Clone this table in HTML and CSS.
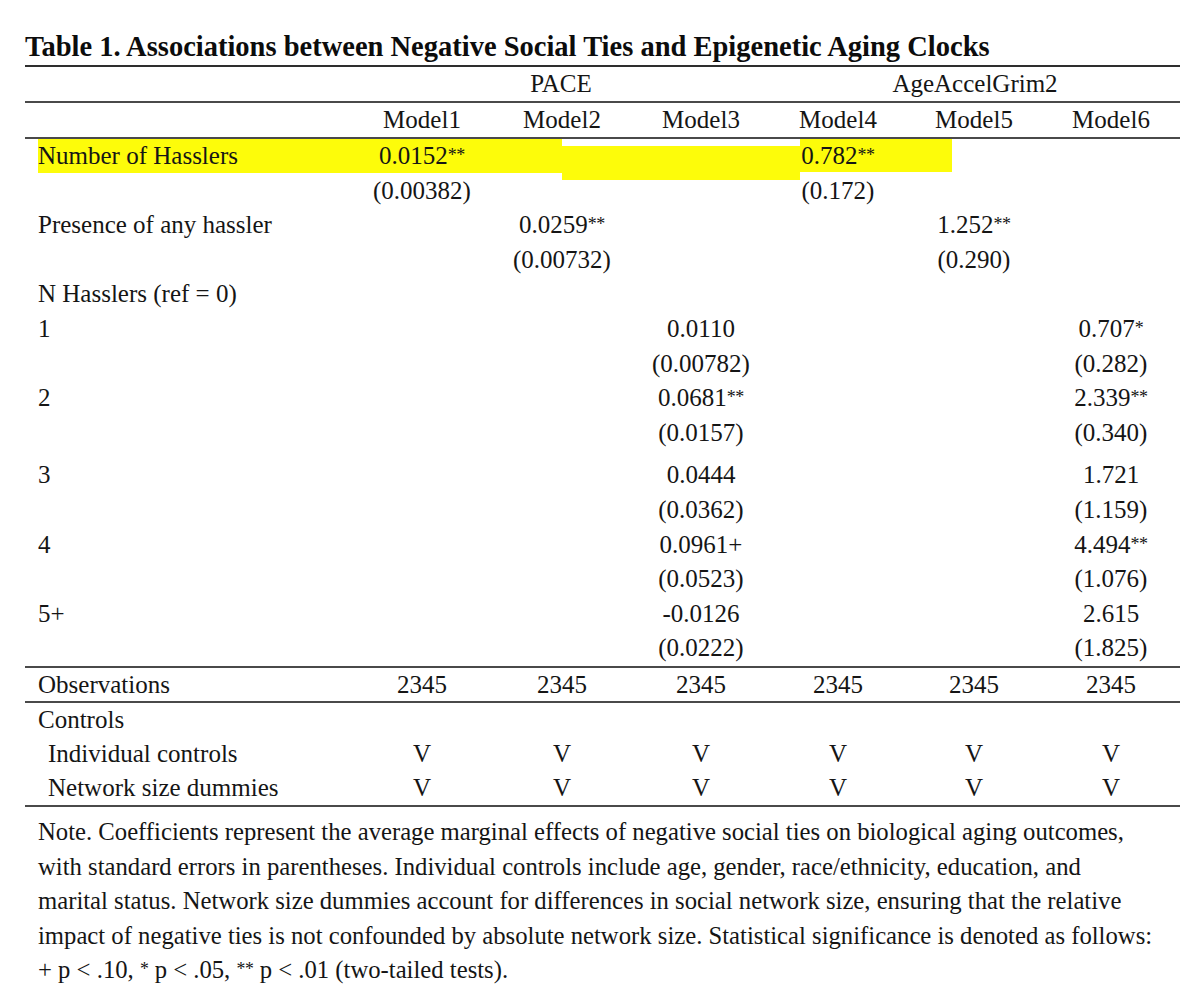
FILE: index.html
```html
<!DOCTYPE html>
<html lang="en">
<head>
<meta charset="utf-8">
<title>Table 1</title>
<link rel="stylesheet" href="styles.css">
</head>
<body>
<div class="sheet">
  <h1 class="title">Table 1. Associations between Negative Social Ties and Epigenetic Aging Clocks</h1>

  <div class="hdr row">
    <div class="lab"></div>
    <div class="span3">PACE</div>
    <div class="span3">AgeAccelGrim2</div>
  </div>
  <div class="hdr row">
    <div class="lab"></div>
    <div>Model1</div><div>Model2</div><div>Model3</div>
    <div>Model4</div><div>Model5</div><div>Model6</div>
  </div>

  <div class="coef">
    <div class="hl hl-a"></div>
    <div class="hl hl-b"></div>
    <div class="hl hl-c"></div>

    <div class="row"><div class="lab">Number of Hasslers</div><div>0.0152<span class="sig">**</span></div><div></div><div></div><div>0.782<span class="sig">**</span></div><div></div><div></div></div>
    <div class="row"><div class="lab"></div><div>(0.00382)</div><div></div><div></div><div>(0.172)</div><div></div><div></div></div>
    <div class="row"><div class="lab">Presence of any hassler</div><div></div><div>0.0259<span class="sig">**</span></div><div></div><div></div><div>1.252<span class="sig">**</span></div><div></div></div>
    <div class="row"><div class="lab"></div><div></div><div>(0.00732)</div><div></div><div></div><div>(0.290)</div><div></div></div>
    <div class="row"><div class="lab">N Hasslers (ref = 0)</div><div></div><div></div><div></div><div></div><div></div><div></div></div>
    <div class="row"><div class="lab">1</div><div></div><div></div><div>0.0110</div><div></div><div></div><div>0.707<span class="sig">*</span></div></div>
    <div class="row"><div class="lab"></div><div></div><div></div><div>(0.00782)</div><div></div><div></div><div>(0.282)</div></div>
    <div class="row"><div class="lab">2</div><div></div><div></div><div>0.0681<span class="sig">**</span></div><div></div><div></div><div>2.339<span class="sig">**</span></div></div>
    <div class="row"><div class="lab"></div><div></div><div></div><div>(0.0157)</div><div></div><div></div><div>(0.340)</div></div>
    <div class="row gap"><div class="lab">3</div><div></div><div></div><div>0.0444</div><div></div><div></div><div>1.721</div></div>
    <div class="row"><div class="lab"></div><div></div><div></div><div>(0.0362)</div><div></div><div></div><div>(1.159)</div></div>
    <div class="row"><div class="lab">4</div><div></div><div></div><div>0.0961+</div><div></div><div></div><div>4.494<span class="sig">**</span></div></div>
    <div class="row"><div class="lab"></div><div></div><div></div><div>(0.0523)</div><div></div><div></div><div>(1.076)</div></div>
    <div class="row"><div class="lab">5+</div><div></div><div></div><div>-0.0126</div><div></div><div></div><div>2.615</div></div>
    <div class="row"><div class="lab"></div><div></div><div></div><div>(0.0222)</div><div></div><div></div><div>(1.825)</div></div>
  </div>

  <div class="obs row">
    <div class="lab">Observations</div>
    <div>2345</div><div>2345</div><div>2345</div><div>2345</div><div>2345</div><div>2345</div>
  </div>

  <div class="controls">
    <div class="row"><div class="lab">Controls</div><div></div><div></div><div></div><div></div><div></div><div></div></div>
    <div class="row"><div class="lab sub">Individual controls</div><div>V</div><div>V</div><div>V</div><div>V</div><div>V</div><div>V</div></div>
    <div class="row"><div class="lab sub">Network size dummies</div><div>V</div><div>V</div><div>V</div><div>V</div><div>V</div><div>V</div></div>
  </div>

  <p class="note">
    <span class="ln">Note. Coefficients represent the average marginal effects of negative social ties on biological aging outcomes,</span>
    <span class="ln">with standard errors in parentheses. Individual controls include age, gender, race/ethnicity, education, and</span>
    <span class="ln">marital status. Network size dummies account for differences in social network size, ensuring that the relative</span>
    <span class="ln">impact of negative ties is not confounded by absolute network size. Statistical significance is denoted as follows:</span>
    <span class="ln">+ p &lt; .10, <span class="sig">*</span> p &lt; .05, <span class="sig">**</span> p &lt; .01 (two-tailed tests).</span>
  </p>
</div>
</body>
</html>
```

FILE: styles.css
```css
html, body {
  margin: 0;
  padding: 0;
  background: #ffffff;
}

body {
  font-family: "Liberation Serif", "Times New Roman", serif;
  font-size: 25px;
  color: #151515;
}

.sheet {
  width: 1155px;
  margin-left: 25px;
}

.title {
  margin: 0;
  padding: 32px 0 3px;
  font-size: 28.5px;
  font-weight: bold;
  line-height: 30px;
  color: #0c0c0c;
  border-bottom: 2px solid #2e2e2e;
  white-space: nowrap;
}

.row {
  display: grid;
  grid-template-columns: 327px 140px 140px 138px 136px 136px 138px;
  height: 34.6px;
  line-height: 34.6px;
  text-align: center;
  white-space: nowrap;
  position: relative;
  z-index: 1;
}

.row .lab {
  text-align: left;
  padding-left: 13px;
}

.row .lab.sub {
  padding-left: 23px;
}

.span3 {
  grid-column: span 3;
}

.sig {
  font-size: 0.72em;
  vertical-align: 0.18em;
  line-height: 0;
  letter-spacing: -0.02em;
}

.hdr {
  height: 34px;
  line-height: 34px;
  border-bottom: 2px solid #4a4a4a;
}

.coef {
  position: relative;
  border-bottom: 2px solid #4a4a4a;
}

.row.gap {
  margin-top: 8px;
}

.hl {
  position: absolute;
  background: #fdfc0a;
  z-index: 0;
}

.hl-a {
  left: 13px;
  top: 0;
  width: 524px;
  height: 34px;
}

.hl-b {
  left: 537px;
  top: 7px;
  width: 238px;
  height: 34px;
}

.hl-c {
  left: 775px;
  top: 0;
  width: 152px;
  height: 33px;
}

.obs {
  height: 33px;
  line-height: 33px;
  border-bottom: 2px solid #4a4a4a;
}

.controls {
  border-bottom: 2px solid #4a4a4a;
}

.controls .row {
  height: 34px;
  line-height: 34px;
}

.note {
  margin: 0;
  padding: 8px 0 0 13px;
  font-size: 24.7px;
  line-height: 34.6px;
}

.note .ln {
  display: block;
  white-space: nowrap;
}
```
